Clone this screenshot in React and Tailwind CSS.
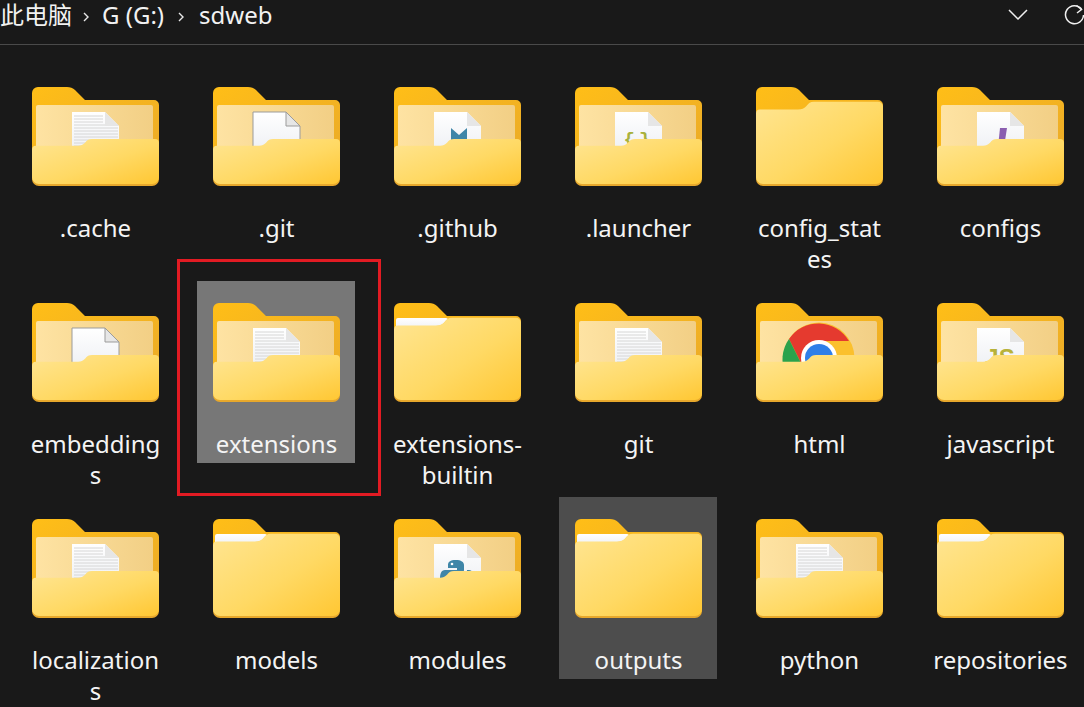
import React from "react";

const folders = [
  { name: ".cache", kind: "text" },
  { name: ".git", kind: "blank" },
  { name: ".github", kind: "markdown" },
  { name: ".launcher", kind: "braces" },
  { name: "config_states", kind: "empty" },
  { name: "configs", kind: "purple" },
  { name: "embeddings", kind: "blank" },
  { name: "extensions", kind: "text", selected: "strong" },
  { name: "extensions-builtin", kind: "paper" },
  { name: "git", kind: "text" },
  { name: "html", kind: "chrome" },
  { name: "javascript", kind: "js" },
  { name: "localizations", kind: "text" },
  { name: "models", kind: "paper" },
  { name: "modules", kind: "python" },
  { name: "outputs", kind: "paper", selected: "soft" },
  { name: "python", kind: "text" },
  { name: "repositories", kind: "paper" },
];

const FRONT_OPEN = "M4 60H46C49 60 51 59 53 57C55 54 57 53 60 53H123a4 4 0 0 1 4 4V92a7 7 0 0 1-7 7H7a7 7 0 0 1-7-7V64a4 4 0 0 1 4-4Z";
const FRONT_FULL = "M4 23H42C46 23 48 22 50 20C52 17 54 15 58 15H122a5 5 0 0 1 5 5V92a7 7 0 0 1-7 7H7a7 7 0 0 1-7-7V27a4 4 0 0 1 4-4Z";

const Gradients = () => (
  <svg className="absolute w-0 h-0">
    <defs>
      <linearGradient id="tab" x1="0" y1="0" x2="1" y2="1">
        <stop offset="0" stopColor="#ffbe17" />
        <stop offset="1" stopColor="#e9a92a" />
      </linearGradient>
      <linearGradient id="inner" x1="0" y1="0" x2="1" y2="0">
        <stop offset="0" stopColor="#fee3a3" />
        <stop offset="1" stopColor="#f2cf85" />
      </linearGradient>
      <linearGradient id="front" x1="0" y1="0" x2="1" y2="1">
        <stop offset="0" stopColor="#ffe592" />
        <stop offset="0.55" stopColor="#ffd964" />
        <stop offset="1" stopColor="#ffc733" />
      </linearGradient>
      <linearGradient id="pale" x1="0" y1="0" x2="0" y2="1">
        <stop offset="0" stopColor="#ffffff" />
        <stop offset="1" stopColor="#eef0f4" />
      </linearGradient>
    </defs>
  </svg>
);

// the sheet sticking out of an open folder
const Doc = ({ outline, children }) => (
  <>
    <path d="M40 25H73L87 39V64H40Z" fill="url(#pale)" stroke={outline ? "#9b9b9b" : "none"} />
    {children}
    <path d="M73 25L87 39H73Z" fill="#e6e6e6" stroke={outline ? "#9b9b9b" : "none"} />
  </>
);

const TextLines = () => (
  <g stroke="#d6d6d6" strokeWidth="1">
    {[29, 32, 35, 38, 41, 44, 47, 50, 53, 56, 59].map((y) => (
      <line key={y} x1="42" x2={y < 38 ? 71 : 86} y1={y} y2={y} />
    ))}
  </g>
);

const Contents = ({ kind }) => {
  if (kind === "text") return <Doc><TextLines /></Doc>;
  if (kind === "blank") return <Doc outline />;
  if (kind === "markdown")
    return <Doc><path d="M57 41L65 48L73 41V60H57Z" fill="#3f86a8" /></Doc>;
  if (kind === "braces")
    return (
      <Doc>
        <text x="64" y="58" textAnchor="middle" fontSize="19" fontWeight="700" letterSpacing="4" fill="#a9b13c" fontFamily="Liberation Mono, monospace">{"{}"}</text>
      </Doc>
    );
  if (kind === "purple")
    return <Doc><path d="M63 41H70L67 60H61Z" fill="#8b5fb0" /></Doc>;
  if (kind === "js")
    return (
      <Doc>
        <text x="63" y="63" textAnchor="middle" fontSize="24" fontWeight="700" fill="#b7b23a" fontFamily="Liberation Sans, sans-serif">JS</text>
      </Doc>
    );
  if (kind === "python")
    return (
      <Doc>
        <path d="M62 41c-6 0-8 2-8 5v3h9v2H51c-4 0-5 4-5 9v4h6v-4c0-3 2-5 5-5h9c3 0 4-2 4-4v-5c0-3-3-5-8-5Z" fill="#3f86a8" />
        <path d="M73 51h2c3 0 4 3 4 6h-9c2-1 3-3 3-6Z" fill="#3f86a8" />
        <circle cx="58" cy="45" r="1.3" fill="#fff" />
      </Doc>
    );
  if (kind === "chrome")
    return (
      <>
        <circle cx="63" cy="55" r="35.5" fill="#fbc02d" />
        <path d="M33 36A35.5 35.5 0 0 1 93 38H63L46 62Z" fill="#e53a2f" />
        <path d="M33 36A35.5 35.5 0 0 0 30 72H50L46 62Z" fill="#2ba24c" />
        <circle cx="63" cy="55" r="18" fill="#fff" />
        <circle cx="63" cy="55" r="14" fill="#2f7fe8" />
      </>
    );
  return null;
};

const FolderIcon = ({ kind }) => {
  const closed = kind === "empty" || kind === "paper";
  const front = closed ? FRONT_FULL : FRONT_OPEN;
  return (
    <svg width="127" height="99" viewBox="0 0 127 99" className="block shrink-0">
      <path d="M6 0H35C38 0 41 1 43 3L53 13H122a5 5 0 0 1 5 5V90H0V6a6 6 0 0 1 6-6Z" fill="url(#tab)" />
      {!closed && (
        <>
          <rect x="4" y="18" width="117" height="44" rx="2" fill="url(#inner)" />
          <Contents kind={kind} />
        </>
      )}
      {kind === "paper" && <rect x="2" y="15" width="52" height="11" rx="2" fill="url(#pale)" />}
      <path d={front} fill="#e7a82c" />
      <svg width="127" height="97" viewBox="0 0 127 99" preserveAspectRatio="none">
        <path d={front} fill="url(#front)" />
      </svg>
    </svg>
  );
};

const Crumb = () => (
  <svg width="8" height="12" viewBox="0 0 8 12" className="shrink-0 mt-[11px]">
    <path d="M2 2L6 6L2 10" fill="none" stroke="#e8e8e8" strokeWidth="1.4" />
  </svg>
);

const Header = () => (
  <div className="h-[45px] border-b border-[#4a4a4a] flex items-start text-[24px] leading-[29px] text-[#f2f2f2]">
    <span>此电脑</span>
    <span className="ml-[10px] mr-[12px] flex"><Crumb /></span>
    <span>G (G:)</span>
    <span className="ml-[13px] mr-[14px] flex"><Crumb /></span>
    <span>sdweb</span>
    <div className="ml-auto flex items-start">
      <svg width="20" height="12" viewBox="0 0 20 12" className="mt-[8px]">
        <path d="M1 2L10 11L19 2" fill="none" stroke="#efefef" strokeWidth="1.5" />
      </svg>
      <svg width="21" height="22" viewBox="0 0 21 22" className="ml-[36px] mt-[4px] -mr-px">
        <path d="M17.5 5A9 9 0 1 0 19.5 11" fill="none" stroke="#efefef" strokeWidth="1.5" />
        <path d="M12.5 1.5L17.5 5.5L13 9" fill="none" stroke="#efefef" strokeWidth="1.5" />
      </svg>
    </div>
  </div>
);

const FolderCell = ({ name, kind, selected }) => (
  <div
    className={
      "h-[182px] flex flex-col items-center pt-[22px] " +
      (selected === "strong" ? "bg-[#777777]" : selected === "soft" ? "bg-[#4d4d4d]" : "")
    }
  >
    <FolderIcon kind={kind} />
    <div className="mt-[26px] ml-px w-[135px] shrink-0 text-center text-[24px] leading-[31px] text-[#f4f4f4] break-words">
      {name}
    </div>
  </div>
);

export default function App() {
  return (
    <div className="relative w-[1084px] h-[707px] overflow-hidden bg-[#191919] font-['Noto_Sans','Noto_Sans_CJK_SC',sans-serif]">
      <Gradients />
      <Header />
      <div className="grid grid-cols-[repeat(6,158px)] auto-rows-[182px] gap-x-[23px] gap-y-[34px] pl-4 pt-5">
        {folders.map((f) => (
          <FolderCell key={f.name} {...f} />
        ))}
      </div>
      {/* red annotation box drawn over the screenshot */}
      <div className="absolute left-[177px] top-[259px] w-[204px] h-[237px] border-[3px] border-[#e21b23]" />
    </div>
  );
}
